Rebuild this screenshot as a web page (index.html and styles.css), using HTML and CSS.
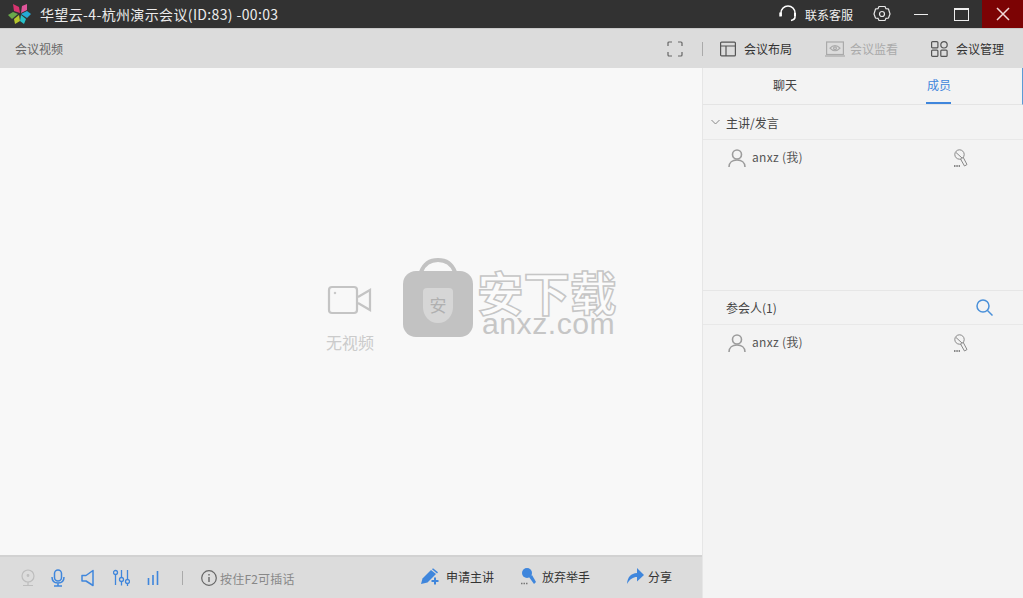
FILE: index.html
```html
<!DOCTYPE html>
<html lang="zh">
<head>
<meta charset="utf-8">
<title>华望云</title>
<link rel="stylesheet" href="styles.css">
</head>
<body>
<div class="app">
  <header class="titlebar">
    <svg class="logo" width="24" height="24" viewBox="0 0 24 24">
      <path d="M5 2l6 3 1 6-6-2z" fill="#d8336f"/>
      <path d="M14 4l5-2v6l-6 3z" fill="#e0559a"/>
      <path d="M13 12l6-3 4 3-4 4z" fill="#26a9d6"/>
      <path d="M13 13l5 4-2 5-4-3z" fill="#27c1c9"/>
      <path d="M11 13l1 6-5 3-1-5z" fill="#b5c72d"/>
      <path d="M10 12l-5-2-5 3 4 4z" fill="#6aa84a"/>
    </svg>
    <div class="app-title">华望云-4-杭州演示会议(ID:83) -00:03</div>
    <div class="support">
      <svg width="18" height="18" viewBox="0 0 18 18" fill="none" stroke="#fff" stroke-width="1.600"><path d="M2 11V8a7 7 0 0 1 14 0v4c0 2-2 3-4 3.500"/><path d="M1.500 7.500v4" stroke-width="2.400"/><path d="M16 8v3" stroke-width="2"/></svg>
      <span>联系客服</span>
    </div>
    <svg class="gear" width="18" height="18" viewBox="0 0 18 18" fill="none" stroke="#e8e8e8" stroke-width="1.200"><path d="M6 1.500h6l1 2.200 2.500.3L17 9l-1.500 4-2.500.3-1 2.200H6l-1-2.200-2.500-.3L1 9l1.500-5L5 3.700z"/><circle cx="9" cy="9" r="2.500"/></svg>
    <div class="win-btn"><span class="min"></span></div>
    <div class="win-btn"><span class="max"></span></div>
    <div class="win-btn close">
      <svg width="14" height="14" viewBox="0 0 14 14" stroke="#f0d8d8" stroke-width="1.500"><path d="M1 1l12 12M13 1L1 13"/></svg>
    </div>
  </header>

  <div class="toolbar">
    <div class="tb-title">会议视频</div>
    <svg class="fs" width="16" height="16" viewBox="0 0 16 16" fill="none" stroke="#666" stroke-width="1.200"><path d="M1 5V2a1 1 0 0 1 1-1h3M11 1h3a1 1 0 0 1 1 1v3M15 11v3a1 1 0 0 1-1 1h-3M5 15H2a1 1 0 0 1-1-1v-3"/></svg>
    <span class="tb-sep"></span>
    <div class="tb-item">
      <svg width="16" height="16" viewBox="0 0 16 16" fill="none" stroke="#555" stroke-width="1.200"><rect x=".6" y="1.100" width="14.800" height="13.800" rx="1"/><path d="M1 5h14M6 5v10"/></svg>
      <span>会议布局</span>
    </div>
    <div class="tb-item off">
      <svg width="20" height="16" viewBox="0 0 20 16" fill="none" stroke="#aaa" stroke-width="1.200"><rect x="1.600" y="1" width="16.800" height="12.500"/><path d="M0 15h20"/><path d="M5 7.200c3-3.400 7-3.400 10 0-3 3.400-7 3.400-10 0z"/><circle cx="10" cy="7.200" r="1.400"/></svg>
      <span>会议监看</span>
    </div>
    <div class="tb-item">
      <svg width="17" height="16" viewBox="0 0 17 16" fill="none" stroke="#555" stroke-width="1.200"><rect x=".6" y=".6" width="6.300" height="6.300" rx="1"/><circle cx="13" cy="3.800" r="3.200"/><rect x=".6" y="9.100" width="6.300" height="6.300" rx="1"/><rect x="9.800" y="9.100" width="6.300" height="6.300" rx="1"/></svg>
      <span>会议管理</span>
    </div>
  </div>

  <div class="content">
    <main class="stage">
      <div class="video-area">
        <div class="no-video">
          <svg width="46" height="30" viewBox="0 0 46 30" fill="none" stroke="#c4c4c4" stroke-width="2.200"><rect x="2" y="2" width="28" height="26" rx="3"/><path d="M31 12l12-7v20l-12-7"/><circle cx="8" cy="8" r=".8" fill="#c4c4c4" stroke-width="1"/></svg>
          <span>无视频</span>
        </div>
        <div class="watermark">
          <div class="wm-bag">
            <svg class="wm-handle" width="38" height="14" viewBox="0 0 38 14" fill="none" stroke="#c2c2c2" stroke-width="4"><path d="M2 14C5 6 11 2 19 2s14 4 17 12"/></svg>
            <div class="wm-shield"><span>安</span></div>
          </div>
          <div class="wm-text">
            <div class="wm-cn">安下载</div>
            <div class="wm-en">anxz.com</div>
          </div>
        </div>
      </div>
      <footer class="bottombar">
        <div class="bb-icons">
          <svg width="14" height="18" viewBox="0 0 14 18" fill="none" stroke="#bdbdbd" stroke-width="1.200"><circle cx="7" cy="7" r="6"/><circle cx="7" cy="6.500" r=".8"/><path d="M7 13v3M2 16.500h10"/></svg>
          <svg width="14" height="18" viewBox="0 0 14 18" fill="none" stroke="#3f86dc" stroke-width="1.500"><rect x="3.500" y="1" width="7" height="11" rx="3.500"/><path d="M1 8c0 4 2.500 6 6 6s6-2 6-6M7 14v2.500M3 17h8"/></svg>
          <svg width="14" height="18" viewBox="0 0 14 18" fill="none" stroke="#3f86dc" stroke-width="1.500"><path d="M12 1.500v15L5 12H1V6.500h4z" stroke-linejoin="round"/></svg>
          <svg width="17" height="18" viewBox="0 0 17 18" fill="none" stroke="#3f86dc" stroke-width="1.300"><path d="M2.500 6v10M8.500 1v7M8.500 13v3.500M14.500 1v9M14.500 14.500V17"/><circle cx="2.500" cy="3.500" r="2"/><circle cx="8.500" cy="10.500" r="2"/><circle cx="14.500" cy="12.500" r="2"/></svg>
          <svg width="12" height="18" viewBox="0 0 12 18" fill="none" stroke="#3f86dc" stroke-width="1.600"><path d="M1.500 9v7M6 6v10M10.500 2v14"/></svg>
        </div>
        <span class="bb-sep"></span>
        <div class="hint">
          <svg width="16" height="16" viewBox="0 0 16 16" fill="none" stroke="#666" stroke-width="1.200"><circle cx="8" cy="8" r="7.300"/><path d="M8 7v5M8 4v1.600" stroke-width="1.400"/></svg>
          <span class="hint-text">按住F2可插话</span>
        </div>
        <div class="actions">
          <div class="action a1">
            <svg width="18" height="17" viewBox="0 0 18 17"><path d="M0 16l1.500-5.500L10 2l5 4-8.500 8.500z" fill="#3f86dc"/><path d="M11 1.200l1-1 5 4-1 1.300z" fill="#3f86dc"/><path d="M14 9.500v7M10.500 13h7" stroke="#3f86dc" stroke-width="2"/></svg>
            <span>申请主讲</span>
          </div>
          <div class="action a2">
            <svg width="15" height="17" viewBox="0 0 15 17"><circle cx="6" cy="5" r="5" fill="#3f86dc"/><path d="M8 9l3-2 4 7-2 2z" fill="#3f86dc"/><path d="M0 15.500h7" stroke="#777" stroke-width="1.500" stroke-dasharray="1.500 1"/></svg>
            <span>放弃举手</span>
          </div>
          <div class="action a3">
            <svg width="17" height="16" viewBox="0 0 17 16"><path d="M0 16C.5 9 4 5.500 10 5V0l7 7-7 6.500V9C6 9 3 11 0 16z" fill="#3f86dc"/></svg>
            <span>分享</span>
          </div>
        </div>
      </footer>
    </main>

    <aside class="panel">
      <nav class="tabs">
        <div class="tab">聊天</div>
        <div class="tab active">成员</div>
      </nav>
      <section class="presenters">
        <div class="sec-head">
          <svg class="chev" width="9" height="6" viewBox="0 0 9 6" fill="none" stroke="#888"><path d="M.5 1l4 4 4-4"/></svg>
          <span>主讲/发言</span>
        </div>
        <div class="member">
          <svg class="person" width="18" height="18" viewBox="0 0 18 18" fill="none" stroke="#9c9c9c" stroke-width="1.600"><circle cx="9" cy="5.500" r="4.500"/><path d="M1 18c0-4.500 3.500-7 8-7s8 2.500 8 7"/></svg>
          <span class="name">anxz (我)</span>
          <svg class="mic" width="14" height="18" viewBox="0 0 14 18" fill="none" stroke="#888"><circle cx="5.500" cy="5.500" r="4.700"/><path d="M2 3.500l6 5.500M6.500 10l4 7 2.500-1.500-4-7.500"/><path d="M0 17h6" stroke="#666" stroke-dasharray="1.500 .8" stroke-width="1.400"/></svg>
        </div>
      </section>
      <section class="attendees">
        <div class="sec-head">
          <span>参会人(1)</span>
          <svg class="search" width="17" height="17" viewBox="0 0 17 17" fill="none" stroke="#4a90d9" stroke-width="1.500"><circle cx="7" cy="7" r="6"/><path d="M11.500 11.500l5 5"/></svg>
        </div>
        <div class="member">
          <svg class="person" width="18" height="18" viewBox="0 0 18 18" fill="none" stroke="#9c9c9c" stroke-width="1.600"><circle cx="9" cy="5.500" r="4.500"/><path d="M1 18c0-4.500 3.500-7 8-7s8 2.500 8 7"/></svg>
          <span class="name">anxz (我)</span>
          <svg class="mic" width="14" height="18" viewBox="0 0 14 18" fill="none" stroke="#888"><circle cx="5.500" cy="5.500" r="4.700"/><path d="M2 3.500l6 5.500M6.500 10l4 7 2.500-1.500-4-7.500"/><path d="M0 17h6" stroke="#666" stroke-dasharray="1.500 .8" stroke-width="1.400"/></svg>
        </div>
      </section>
    </aside>
  </div>
</div>
</body>
</html>
```
FILE: styles.css
```css
* { box-sizing: border-box; }
html, body { margin: 0; height: 100%; overflow: hidden; }
body { font-family: "Noto Sans CJK SC", "Liberation Sans", sans-serif; font-size: 12px; color: #333; }
.app { width: 1023px; height: 598px; display: flex; flex-direction: column; }

.titlebar { height: 28px; background: #323232; display: flex; align-items: center; padding-left: 8px; color: #eee; flex: none; }
.logo { flex: none; }
.app-title { font-size: 14px; margin-left: 8px; flex: 1; color: #ececec; white-space: nowrap; letter-spacing: .36px; }
.support { display: flex; align-items: center; gap: 8px; color: #f0f0f0; margin-right: 1px; }
.gear { margin-left: 19px; }
.win-btn { width: 41px; height: 28px; display: flex; align-items: center; justify-content: center; }
.gear + .win-btn { margin-left: 9px; }
.min { width: 14px; height: 1px; background: #eee; }
.max { width: 15px; height: 13px; border: 1.500px solid #eee; border-top-width: 2px; }
.close { background: #7c0304; }

.toolbar { height: 40px; background: #dcdcdc; display: flex; align-items: center; padding: 0 19px 0 15px; flex: none; border-top: 1px solid #c9c9c9; }
.tb-title { color: #666; flex: 1; }
.fs { margin-right: 19px; }
.tb-sep { width: 1px; height: 14px; background: #aaa; margin-right: 17px; }
.tb-item { display: flex; align-items: center; gap: 8px; color: #333; margin-left: 33px; }
.tb-sep + .tb-item { margin-left: 0; }
.tb-item.off { color: #aaa; gap: 5px; }

.content { flex: 1; display: flex; min-height: 0; }
.stage { width: 702px; display: flex; flex-direction: column; flex: none; }
.video-area { flex: 1; background: #f8f8f8; position: relative; }
.no-video { position: absolute; left: 325px; top: 217px; width: 50px; display: flex; flex-direction: column; align-items: center; gap: 16px; color: #cbcbcb; font-size: 16px; white-space: nowrap; line-height: 22px; }
.watermark { position: absolute; left: 403px; top: 203px; display: flex; }
.wm-bag { width: 70px; height: 66px; background: #c2c2c2; border-radius: 13px; position: relative; display: flex; justify-content: center; align-items: center; flex: none; }
.wm-handle { position: absolute; left: 16px; top: -13px; }
.wm-shield { width: 30px; height: 35px; background: #d6d6d6; border-radius: 4px 4px 50% 50% / 4px 4px 45% 45%; display: flex; align-items: center; justify-content: center; font-size: 17px; line-height: 20px; color: #b0b0b0; margin-top: 2px; }
.wm-text { margin-left: 4px; width: 142px; }
.wm-cn { font-size: 46.500px; line-height: 40px; height: 41px; letter-spacing: 0; color: #fbfbfb; -webkit-text-stroke: 1.500px #c6c6c6; font-weight: 700; white-space: nowrap; }
.wm-en { font-family: "Liberation Sans", sans-serif; font-size: 30.200px; line-height: 24px; color: #c6c6c6; letter-spacing: .5px; margin-left: 5px; white-space: nowrap; }

.bottombar { height: 43px; flex: none; background: #dcdcdc; border-top: 2px solid #d2d2d2; display: flex; align-items: center; padding: 0 30px 0 21px; }
.bb-icons { display: flex; align-items: center; gap: 16px; }
.bb-icons svg:nth-child(4) { margin-left: 2px; }
.bb-icons svg:nth-child(5) { margin-left: 1px; }
.bb-sep { width: 1px; height: 14px; background: #aaa; margin: 0 18px 0 23px; }
.hint { display: flex; align-items: center; gap: 3px; color: #888; }
.hint-text { letter-spacing: .2px; position: relative; top: 1px; }
.actions { display: flex; margin-left: auto; align-items: center; margin-top: -3px; }
.action { display: flex; align-items: center; gap: 7px; color: #333; }
.a2 { margin-left: 27px; gap: 6px; }
.a3 { margin-left: 37px; gap: 4px; }

.panel { flex: 1; background: #f3f3f3; border-left: 1px solid #e6e6e6; display: flex; flex-direction: column; min-width: 0; position: relative; }
.tabs { height: 37px; display: flex; flex: none; padding-left: 12px; border-bottom: 1px solid #e4e4e4; border-right: 1px solid #5b9bd5; }
.tab { width: 140px; text-align: center; line-height: 33px; color: #444; position: relative; flex: none; }
.tab.active { color: #3f86dc; margin-left: 14px; }
.tab.active::after { content: ""; position: absolute; left: 57px; width: 25px; height: 2px; bottom: 0; background: #3f86dc; }
.presenters { height: 186px; flex: none; border-bottom: 1px solid #e6e6e6; }
.attendees { flex: 1; }
.sec-head { height: 35px; display: flex; align-items: center; padding: 0 30px 0 23px; border-bottom: 1px solid #e8e8e8; color: #444; }
.chev { margin-left: -15px; margin-right: 6px; }
.attendees .sec-head { height: 34px; justify-content: space-between; }
.member { height: 36px; display: flex; align-items: center; padding-left: 25px; padding-right: 55px; color: #555; }
.person { flex: none; margin-right: 6px; }
.name { flex: 1; font-size: 12px; letter-spacing: .3px; position: relative; top: -2px; }
.mic { flex: none; }
```
